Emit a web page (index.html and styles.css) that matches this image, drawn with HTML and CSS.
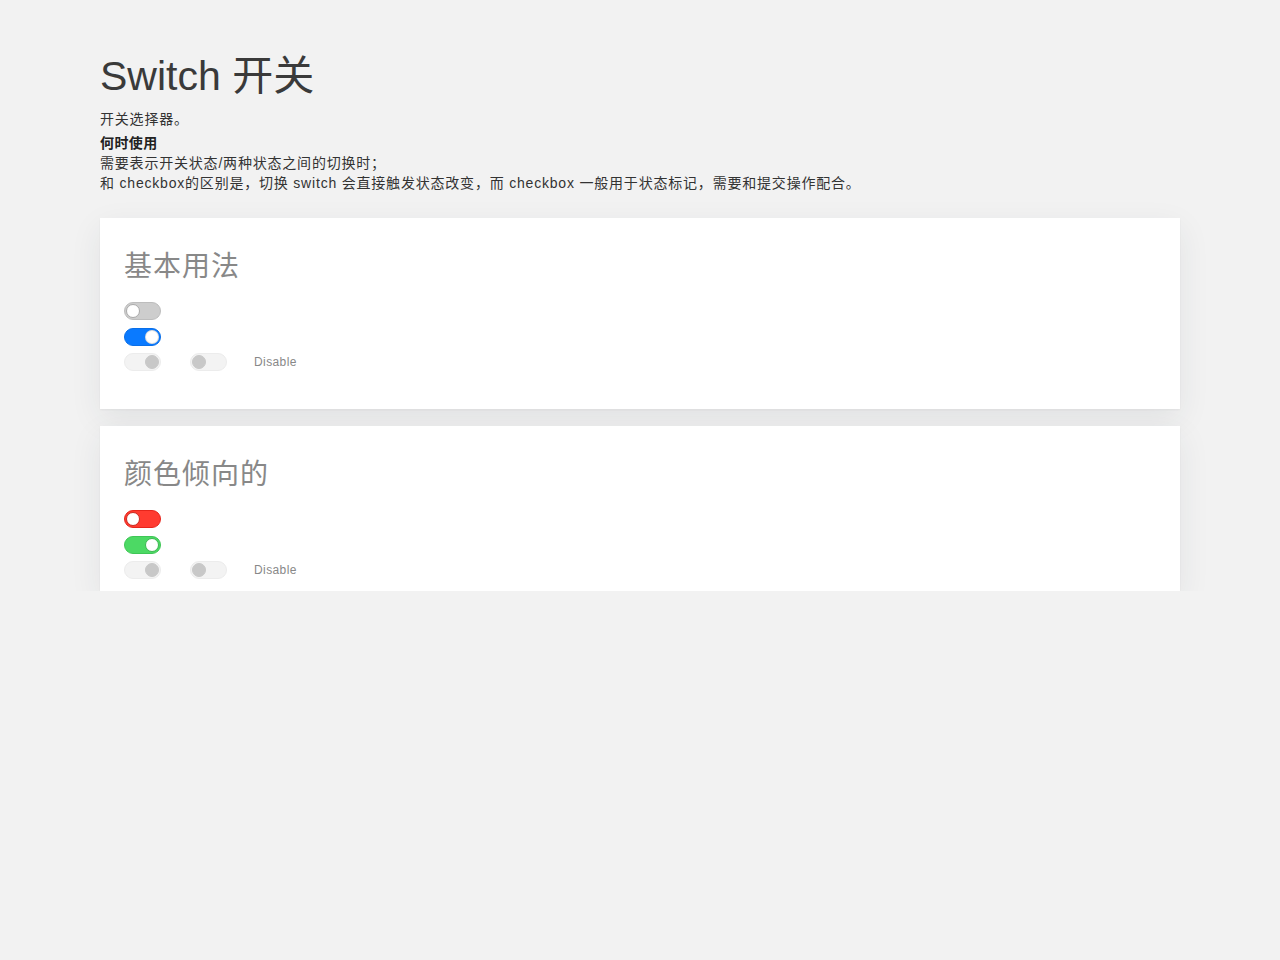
FILE: index.html
```html
<!DOCTYPE html>
<html lang="zh-CN">
<head>
<meta charset="utf-8">
<title>Switch 开关</title>
<link rel="stylesheet" href="styles.css">
</head>
<body>
<div class="page">
  <h1 class="title">Switch 开关</h1>
  <p class="lead">开关选择器。</p>
  <div class="usage">
    <div class="usage-title">何时使用</div>
    <div>需要表示开关状态/两种状态之间的切换时；</div>
    <div>和 checkbox的区别是，切换 switch 会直接触发状态改变，而 checkbox 一般用于状态标记，需要和提交操作配合。</div>
  </div>

  <section class="card card-basic">
    <h2 class="card-title">基本用法</h2>
    <div class="rows">
      <div class="row"><span class="switch"><span class="knob"></span></span></div>
      <div class="row"><span class="switch on blue"><span class="knob"></span></span></div>
      <div class="row">
        <span class="switch on disabled"><span class="knob"></span></span>
        <span class="switch disabled"><span class="knob"></span></span>
        <span class="label">Disable</span>
      </div>
    </div>
  </section>

  <section class="card card-color">
    <h2 class="card-title">颜色倾向的</h2>
    <div class="rows">
      <div class="row"><span class="switch red"><span class="knob"></span></span></div>
      <div class="row"><span class="switch on green"><span class="knob"></span></span></div>
      <div class="row">
        <span class="switch on disabled"><span class="knob"></span></span>
        <span class="switch disabled"><span class="knob"></span></span>
        <span class="label">Disable</span>
      </div>
    </div>
  </section>
</div>
</body>
</html>
```

FILE: styles.css
```css
html, body {
  margin: 0;
  padding: 0;
  background: #f2f2f2;
}
body {
  font-family: "Liberation Sans", "Noto Sans CJK SC", sans-serif;
  color: #333;
}
.page {
  width: 1080px;
  margin: 0 auto;
  padding-top: 51px;
}
.title {
  margin: 0;
  font-size: 41px;
  line-height: 48px;
  font-weight: normal;
  color: #3a3a3a;
  position: relative;
  top: 1px;
}
.lead {
  margin: 10px 0 0;
  font-size: 14px;
  line-height: 20px;
  letter-spacing: 0.8px;
}
.usage {
  margin-top: 4px;
  font-size: 14px;
  line-height: 20px;
  letter-spacing: 0.8px;
}
.usage-title {
  font-weight: bold;
  color: #222;
  letter-spacing: 0.4px;
}
.card {
  background: #fff;
  box-shadow: 0 10px 30px rgba(40, 45, 60, 0.08), 0 1px 2px rgba(0, 0, 0, 0.05);
  padding: 31px 24px 38px;
}
.card-basic {
  margin-top: 25px;
}
.card-color {
  margin-top: 17px;
  padding-bottom: 12px;
}
.card-title {
  margin: 0;
  font-size: 28px;
  line-height: 36px;
  font-weight: normal;
  letter-spacing: 1px;
  color: #888;
}
.rows {
  margin-top: 17px;
  display: flex;
  flex-direction: column;
  gap: 7.5px;
}
.row {
  display: flex;
  align-items: center;
  height: 18px;
}
.switch {
  position: relative;
  box-sizing: border-box;
  width: 37px;
  height: 18px;
  border-radius: 9px;
  background: #cdcdcd;
  border: 1px solid #bdbdbd;
  flex: none;
}
.switch + .switch {
  margin-left: 29px;
}
.knob {
  position: absolute;
  top: 1px;
  left: 1px;
  width: 14px;
  height: 14px;
  box-sizing: border-box;
  border-radius: 50%;
  background: #fff;
  border: 1px solid #a9a9a9;
}
.switch.on .knob {
  left: auto;
  right: 1px;
  border-color: rgba(0, 0, 0, 0.12);
}
.switch.blue {
  background: #0a7aff;
  border-color: #0a6fe8;
}
.switch.red {
  background: #ff3b30;
  border-color: #e6251b;
}
.switch.red .knob {
  border-color: #c92a20;
}
.switch.green {
  background: #4cd964;
  border-color: #3fc656;
}
.switch.green .knob {
  border-color: #3cb650;
}
.switch.disabled {
  background: #f3f3f3;
  border-color: #ececec;
}
.switch.disabled .knob {
  background: #c8c8c8;
  border-color: #c8c8c8;
}
.label {
  margin-left: 27px;
  font-size: 12px;
  letter-spacing: 0.4px;
  color: #888;
}
```
